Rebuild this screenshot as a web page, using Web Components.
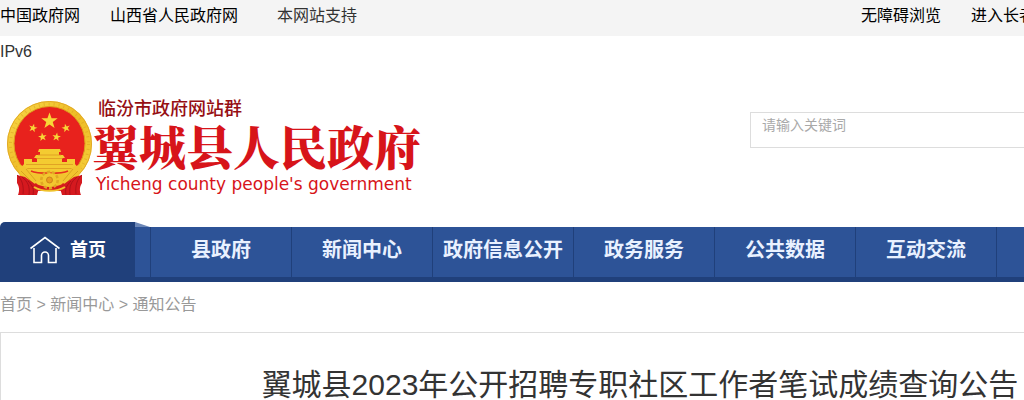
<!DOCTYPE html>
<html lang="zh-CN">
<head>
<meta charset="utf-8">
<title>翼城县人民政府</title>
<style>
  body {
    margin: 0;
    overflow-x: hidden;
    background: #fff;
    color: #333;
    font-family: "Liberation Sans", "Noto Sans CJK SC", sans-serif;
    font-size: 16px;
  }
</style>
</head>
<body>
<site-page>
  <top-bar></top-bar>
  <site-header></site-header>
  <main-nav></main-nav>
  <bread-crumb></bread-crumb>
  <article-box>翼城县2023年公开招聘专职社区工作者笔试成绩查询公告</article-box>
</site-page>

<script>
class SitePage extends HTMLElement {
  constructor() {
    super();
    this.attachShadow({ mode: 'open' }).innerHTML = /*html*/ `
      <style>
        :host {
          display: block;
          min-width: 1280px;
        }
      </style>
      <slot></slot>
    `;
  }
}

class TopBar extends HTMLElement {
  constructor() {
    super();
    this.shadow = this.attachShadow({ mode: 'open' });
  }

  connectedCallback() {
    this.shadow.innerHTML = /*html*/ `
      <style>
        :host {
          display: flex;
          align-items: flex-start;
          height: 36px;
          line-height: 32px;
          background: #f4f4f4;
        }
        a {
          color: #000;
          text-decoration: none;
        }
        .links {
          display: flex;
          flex-wrap: wrap;
          gap: 4px 30px;
          width: 380px;
        }
        .support {
          padding-left: 9px;
        }
        .tools {
          display: flex;
          gap: 30px;
          margin-left: auto;
          padding-right: 213px;
        }
      </style>
      <div class="links">
        <a href="#">中国政府网</a>
        <a href="#">山西省人民政府网</a>
        <span class="support">本网站支持</span>
        <span>IPv6</span>
      </div>
      <div class="tools">
        <a href="#">无障碍浏览</a>
        <a href="#">进入长者模式</a>
      </div>
    `;
  }
}

class NationalEmblem extends HTMLElement {
  constructor() {
    super();
    this.attachShadow({ mode: 'open' }).innerHTML = /*html*/ `
      <style>
        :host {
          display: block;
        }
        svg {
          display: block;
        }
      </style>
      <svg width="88" height="96" viewBox="0 0 88 96" aria-hidden="true">
        <defs>
          <linearGradient id="gold" x1="0" y1="0" x2="1" y2="1">
            <stop offset="0" stop-color="#f9d94a"/>
            <stop offset="0.5" stop-color="#eebc26"/>
            <stop offset="1" stop-color="#f6d23c"/>
          </linearGradient>
          <path id="star" d="M0-10 2.4-3.1 9.5-3.1 3.8 1.2 5.9 8.1 0 4 -5.9 8.1 -3.8 1.2 -9.5-3.1 -2.4-3.1Z"/>
        </defs>
        <!-- wheat ring -->
        <ellipse cx="43.500" cy="44" rx="42.500" ry="43" fill="url(#gold)"/>
        <ellipse cx="43.500" cy="44" rx="39" ry="40" fill="none" stroke="#d89a1c" stroke-width="3" stroke-dasharray="1 4" opacity="0.45"/>
        <ellipse cx="43.500" cy="44" rx="42" ry="42.500" fill="none" stroke="#e2a926" stroke-width="1"/>
        <ellipse cx="43.500" cy="43.500" rx="35.500" ry="37" fill="#e8221d" stroke="#dca01c" stroke-width="1"/>
        <!-- stars -->
        <g fill="#f8d637">
          <use href="#star" transform="translate(43.500 21) scale(0.86)"/>
          <use href="#star" transform="translate(27 28) rotate(14) scale(0.45)"/>
          <use href="#star" transform="translate(60 28) rotate(-14) scale(0.45)"/>
          <use href="#star" transform="translate(36.500 37) rotate(-8) scale(0.45)"/>
          <use href="#star" transform="translate(50.500 37) rotate(8) scale(0.45)"/>
        </g>
        <!-- gate tower -->
        <g fill="#f4cb31">
          <path d="M33 49h21l1 3h-23zM34 52h19v3h-19zM30 55h27l2 3h-31zM31 58h25v4h-25z"/>
          <path d="M18 59h8v3h35v-3h8v5l3 4H15l3-4z"/>
          <path d="M16 68h55l-6 7H22z"/>
        </g>
        <path d="M32 55h23M30 58.500h27M20 64.500h47M18 68.500h51" stroke="#d8921f" stroke-width="0.7"/>
        <!-- lower ears, cogwheel and drapes -->
        <path d="M11 65c8 0 12 4 16 10 5-5 28-5 33 0 4-6 8-10 16-10l-5 17-16 8H32l-16-8z" fill="#f1c42e"/>
        <path d="M25 71c6 3 31 3 37 0" fill="none" stroke="#e8321e" stroke-width="1.500"/>
        <path d="M15 71l12 12M20 69l10 12M72 71 60 83M67 69 57 81" stroke="#d39a1e" stroke-width="0.8"/>
        <path d="M30 83c4 5 23 5 27 0l8 5-11 3H33l-11-3z" fill="#d71c1d"/>
        <path d="M11 75l8 2 10 7 4 4-2 7H12c2-5 1-9-1-12zM76 75l-8 2-10 7-4 4 2 7h19c-2-5-1-9 1-12z" fill="#d5191f"/>
        <path d="M11 75c5 4 7 11 6 19M16 77c6 5 8 9 7 18M22 81c5 5 6 8 5 14M76 75c-5 4-7 11-6 19M71 77c-6 5-8 9-7 18M65 81c-5 5-6 8-5 14" fill="none" stroke="#a50f17" stroke-width="0.8"/>
        <circle cx="43.500" cy="80" r="8" fill="none" stroke="#e0a823" stroke-width="3" stroke-dasharray="3 2"/>
        <circle cx="43.500" cy="80" r="7" fill="#f2c72f"/>
        <circle cx="43.500" cy="80" r="3" fill="#ec9d20" stroke="#c47a18" stroke-width="0.8"/>
        <path d="M28 87c8 5 23 5 31 0" fill="none" stroke="#efc22b" stroke-width="2"/>
      </svg>
    `;
  }
}

class SiteHeader extends HTMLElement {
  constructor() {
    super();
    this.shadow = this.attachShadow({ mode: 'open' });
  }

  connectedCallback() {
    this.shadow.innerHTML = /*html*/ `
      <style>
        :host {
          display: flex;
          align-items: flex-start;
          box-sizing: border-box;
          height: 186px;
          padding-top: 64px;
        }
        .logo {
          display: flex;
          flex: none;
          width: 744px;
          padding-left: 6px;
          color: #d7141a;
          text-decoration: none;
        }
        .names {
          display: grid;
          grid-template-rows: 18px 56px 20px;
          margin-left: -2px;
          white-space: nowrap;
        }
        .group {
          padding-left: 6px;
          color: #960f14;
          font-size: 18px;
          line-height: 18px;
          font-weight: 500;
        }
        .name {
          font-family: "Noto Serif CJK SC", "Noto Sans CJK SC", serif;
          font-size: 47px;
          line-height: 54px;
          font-weight: 900;
        }
        .english {
          padding-left: 4px;
          font-family: "DejaVu Sans", sans-serif;
          font-size: 17px;
          line-height: 20px;
        }
        form {
          flex: 1;
          margin-top: 12px;
        }
        input {
          display: block;
          box-sizing: border-box;
          width: 100%;
          height: 36px;
          padding: 0 11px 10px;
          border: 1px solid #ddd;
          border-radius: 0;
          outline: 0;
          color: #333;
          font: inherit;
          font-size: 14px;
        }
        input::placeholder {
          color: #a9a9a9;
        }
      </style>
      <a class="logo" href="#">
        <national-emblem></national-emblem>
        <span class="names">
          <span class="group">临汾市政府网站群</span>
          <span class="name">翼城县人民政府</span>
          <span class="english">Yicheng county people's government</span>
        </span>
      </a>
      <form>
        <input type="text" aria-label="请输入关键词" placeholder="请输入关键词">
      </form>
    `;
  }
}

class MainNav extends HTMLElement {
  constructor() {
    super();
    this.shadow = this.attachShadow({ mode: 'open' });
    this.items = ['县政府', '新闻中心', '政府信息公开', '政务服务', '公共数据', '互动交流'];
  }

  connectedCallback() {
    this.shadow.innerHTML = /*html*/ `
      <style>
        :host {
          display: block;
        }
        nav {
          display: flex;
          align-items: flex-end;
        }
        a {
          color: #e9f1ff;
          font-weight: bold;
          text-decoration: none;
          white-space: nowrap;
        }
        .home {
          display: flex;
          align-items: center;
          gap: 10px;
          box-sizing: border-box;
          width: 135px;
          height: 60px;
          padding: 0 0 5px 30px;
          border-radius: 5px 0 0 0;
          background: #20407b;
          color: #fff;
          font-size: 18px;
        }
        .home span {
          padding-bottom: 4px;
        }
        .bar {
          flex: 1;
        }
        .fold {
          display: block;
        }
        ul {
          display: flex;
          height: 50px;
          margin: 0;
          padding: 0 0 0 15px;
          border-bottom: 5px solid #20407b;
          background: #2d5397;
          list-style: none;
        }
        li {
          box-sizing: border-box;
          width: 141px;
          border-left: 1px solid #20407b;
          text-align: center;
        }
        li:last-child {
          width: 142px;
          border-right: 1px solid #20407b;
        }
        li a {
          display: block;
          font-size: 20px;
          line-height: 46px;
        }
      </style>
      <nav>
        <a class="home" href="#">
          <svg width="30" height="28" viewBox="0 0 30 28" fill="none" stroke="#fff" stroke-width="1.600" aria-hidden="true">
            <path d="M0.500 12.500 15 1.500 29.500 12.500"/>
            <path d="M4 12v14.500h7.500v-7a3.500 3.500 0 0 1 7 0v7H26V12"/>
          </svg>
          <span>首页</span>
        </a>
        <div class="bar">
          <svg class="fold" width="15" height="5" viewBox="0 0 15 5" aria-hidden="true">
            <path d="M0 0 15 5H0z" fill="#6c87b7"/>
          </svg>
          <ul>${this.renderItems()}</ul>
        </div>
      </nav>
    `;
  }

  renderItems() {
    return this.items
      .map((item) => `<li><a href="#">${item}</a></li>`)
      .join('');
  }
}

class BreadCrumb extends HTMLElement {
  constructor() {
    super();
    this.attachShadow({ mode: 'open' }).innerHTML = /*html*/ `
      <style>
        :host {
          display: block;
          line-height: 46px;
          height: 50px;
          color: #999;
        }
        a {
          color: inherit;
          text-decoration: none;
        }
      </style>
      <a href="#">首页</a> &gt; <a href="#">新闻中心</a> &gt; <a href="#">通知公告</a>
    `;
  }
}

class ArticleBox extends HTMLElement {
  constructor() {
    super();
    this.attachShadow({ mode: 'open' }).innerHTML = /*html*/ `
      <style>
        :host {
          display: block;
          padding: 30px 0;
          border: 1px solid #ddd;
        }
        h1 {
          margin: 0;
          font-size: 30px;
          line-height: 44px;
          font-weight: normal;
          text-align: center;
        }
      </style>
      <h1><slot></slot></h1>
    `;
  }
}

customElements.define('site-page', SitePage);
customElements.define('top-bar', TopBar);
customElements.define('national-emblem', NationalEmblem);
customElements.define('site-header', SiteHeader);
customElements.define('main-nav', MainNav);
customElements.define('bread-crumb', BreadCrumb);
customElements.define('article-box', ArticleBox);
</script>
</body>
</html>
